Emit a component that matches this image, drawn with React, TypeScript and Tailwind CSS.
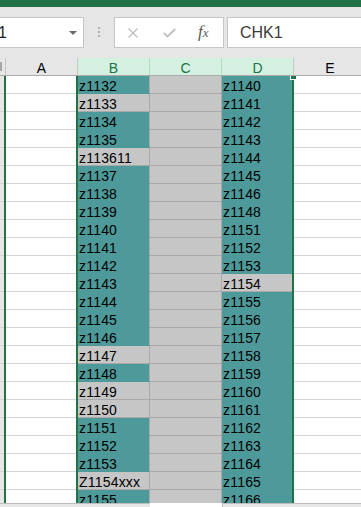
import React from "react";

type Cell = { text: string; teal: boolean };

const colB: Cell[] = [
  ["z1132", true], ["z1133", false], ["z1134", true], ["z1135", true],
  ["z113611", false], ["z1137", true], ["z1138", true], ["z1139", true],
  ["z1140", true], ["z1141", true], ["z1142", true], ["z1143", true],
  ["z1144", true], ["z1145", true], ["z1146", true], ["z1147", false],
  ["z1148", true], ["z1149", false], ["z1150", false], ["z1151", true],
  ["z1152", true], ["z1153", true], ["Z1154xxx", false], ["z1155", true],
].map(([text, teal]) => ({ text: text as string, teal: teal as boolean }));

const colD: Cell[] = [
  "z1140", "z1141", "z1142", "z1143", "z1144", "z1145", "z1146", "z1148",
  "z1151", "z1152", "z1153", "z1154", "z1155", "z1156", "z1157", "z1158",
  "z1159", "z1160", "z1161", "z1162", "z1163", "z1164", "z1165", "z1166",
].map((text) => ({ text, teal: text !== "z1154" }));

const rows = Array.from({ length: 24 }, (_, i) => i);

const DataCell = ({ cell }: { cell: Cell }) => (
  <div
    className={
      cell.teal
        ? "h-[18px] shrink-0 border-b border-r border-b-[#4e9a9a] border-r-[#a9a9a9] bg-[#4e9a9a] pl-[1px] pt-[2px] leading-[16px] tracking-[0.2px] whitespace-nowrap overflow-hidden"
        : "h-[18px] shrink-0 border-b border-r border-[#a9a9a9] bg-[#c6c6c6] pl-[1px] pt-[2px] leading-[16px] tracking-[0.2px] whitespace-nowrap overflow-hidden"
    }
  >
    {cell.text}
  </div>
);

const DCell = ({ cell }: { cell: Cell }) => (
  <div
    className={
      cell.teal
        ? "h-[18px] shrink-0 border-b border-[#4e9a9a] bg-[#4e9a9a] pl-[1px] pt-[2px] leading-[16px] tracking-[0.2px] whitespace-nowrap overflow-hidden"
        : "h-[18px] shrink-0 border-b border-[#a9a9a9] bg-[#c6c6c6] pl-[1px] pt-[2px] leading-[16px] tracking-[0.2px] whitespace-nowrap overflow-hidden"
    }
  >
    {cell.text}
  </div>
);

export default function App() {
  return (
    <div
      className="w-[361px] h-[507px] overflow-hidden bg-white text-black text-[14px]"
      style={{ fontFamily: '"Liberation Sans", Arial, sans-serif' }}
    >
      {/* title strip */}
      <div className="h-[7px] bg-[#217346]" />

      {/* formula bar */}
      <div className="h-[51px] bg-[#e6e6e6] flex items-start pt-[10px] overflow-hidden">
        <div className="-ml-[10px] w-[94px] h-[31px] shrink-0 border border-[#c6c6c6] bg-white flex items-center">
          <span className="pl-[7px] text-[16px] text-[#1e1e1e]">1</span>
          <div className="ml-auto mr-[6px] w-0 h-0 border-l-[4px] border-r-[4px] border-t-[4px] border-l-transparent border-r-transparent border-t-[#6b6b6b]" />
        </div>
        <div className="w-[30px] shrink-0 flex flex-col items-center gap-[2px] pt-[10px]">
          <div className="w-[2px] h-[2px] bg-[#b0b0b0]" />
          <div className="w-[2px] h-[2px] bg-[#b0b0b0]" />
          <div className="w-[2px] h-[2px] bg-[#b0b0b0]" />
        </div>
        <div className="w-[110px] h-[31px] shrink-0 border border-[#c6c6c6] bg-white flex items-center">
          <svg className="ml-[13px]" width="10" height="10" viewBox="0 0 10 10">
            <path d="M0.5 0.5 L9.5 9.5 M9.5 0.5 L0.5 9.5" stroke="#bdbdbd" strokeWidth="1.3" fill="none" />
          </svg>
          <svg className="ml-[25px]" width="13" height="10" viewBox="0 0 13 10">
            <path d="M0.8 5 L4.5 8.6 L12.3 0.8" stroke="#bdbdbd" strokeWidth="1.8" fill="none" />
          </svg>
          <span
            className="ml-[22px] -mt-[2px] italic text-[17px] leading-none text-[#5a5a5a]"
            style={{ fontFamily: '"Liberation Serif", "Times New Roman", serif' }}
          >
            f<span className="text-[13px]">x</span>
          </span>
        </div>
        <div className="ml-[3px] w-[200px] h-[31px] shrink-0 border border-[#c6c6c6] bg-white flex items-center pl-[12px]">
          <span className="text-[16px] text-[#3a3a3a]">CHK1</span>
        </div>
      </div>

      {/* column headers */}
      <div className="flex h-[18px] border-b border-[#ababab] bg-[#e6e6e6] overflow-hidden">
        <div className="w-[6px] shrink-0 border-r border-[#c6c6c6] flex items-center">
          <div className="w-[2px] h-[9px] bg-[#a6a6a6]" />
        </div>
        <div className="w-[72px] shrink-0 border-r border-[#c6c6c6] text-center pt-[2px] leading-[16px]">A</div>
        <div className="w-[72px] shrink-0 border-r border-[#b4d8c3] bg-[#d3f0e0] text-[#217346] text-center pt-[2px] leading-[16px]">B</div>
        <div className="w-[72px] shrink-0 border-r border-[#b4d8c3] bg-[#d3f0e0] text-[#217346] text-center pt-[2px] leading-[16px]">C</div>
        <div className="w-[72px] shrink-0 border-r border-[#c6c6c6] bg-[#d3f0e0] text-[#217346] text-center pt-[2px] leading-[16px]">D</div>
        <div className="w-[72px] shrink-0 text-center pt-[2px] leading-[16px]">E</div>
      </div>

      {/* grid */}
      <div className="relative flex h-[427px] overflow-hidden">
        <div className="w-[6px] shrink-0 border-r-2 border-[#217346] bg-[#e6e6e6] flex flex-col">
          {rows.map((r) => (
            <div key={r} className="h-[18px] shrink-0 border-b border-[#d4d4d4]" />
          ))}
        </div>
        <div className="w-[70px] shrink-0 flex flex-col">
          {rows.map((r) => (
            <div key={r} className="h-[18px] shrink-0 border-b border-[#d4d4d4]" />
          ))}
        </div>
        <div className="w-[74px] shrink-0 border-l-2 border-[#217346] flex flex-col">
          {colB.map((c, i) => (
            <DataCell key={i} cell={c} />
          ))}
        </div>
        <div className="w-[72px] shrink-0 flex flex-col">
          {rows.map((r) => (
            <div key={r} className="h-[18px] shrink-0 border-b border-r border-[#a9a9a9] bg-[#c6c6c6]" />
          ))}
        </div>
        <div className="w-[72px] shrink-0 border-r-2 border-[#217346] flex flex-col">
          {colD.map((c, i) => (
            <DCell key={i} cell={c} />
          ))}
        </div>
        <div className="flex-1 flex flex-col">
          {rows.map((r) => (
            <div key={r} className="h-[18px] shrink-0 border-b border-[#d4d4d4]" />
          ))}
        </div>
        {/* fill handle */}
        <div className="absolute left-[290px] top-[-2px] w-[7px] h-[6px] bg-[#217346] border border-white" />
      </div>

      {/* scrollbar edge */}
      <div className="flex h-[4px]">
        <div className="w-[150px] border-t border-[#bdbdbd] bg-[#e6e6e6]" />
        <div className="w-[72px] bg-white" />
        <div className="flex-1 border-t border-l border-[#bdbdbd] bg-[#e6e6e6]" />
      </div>
    </div>
  );
}
